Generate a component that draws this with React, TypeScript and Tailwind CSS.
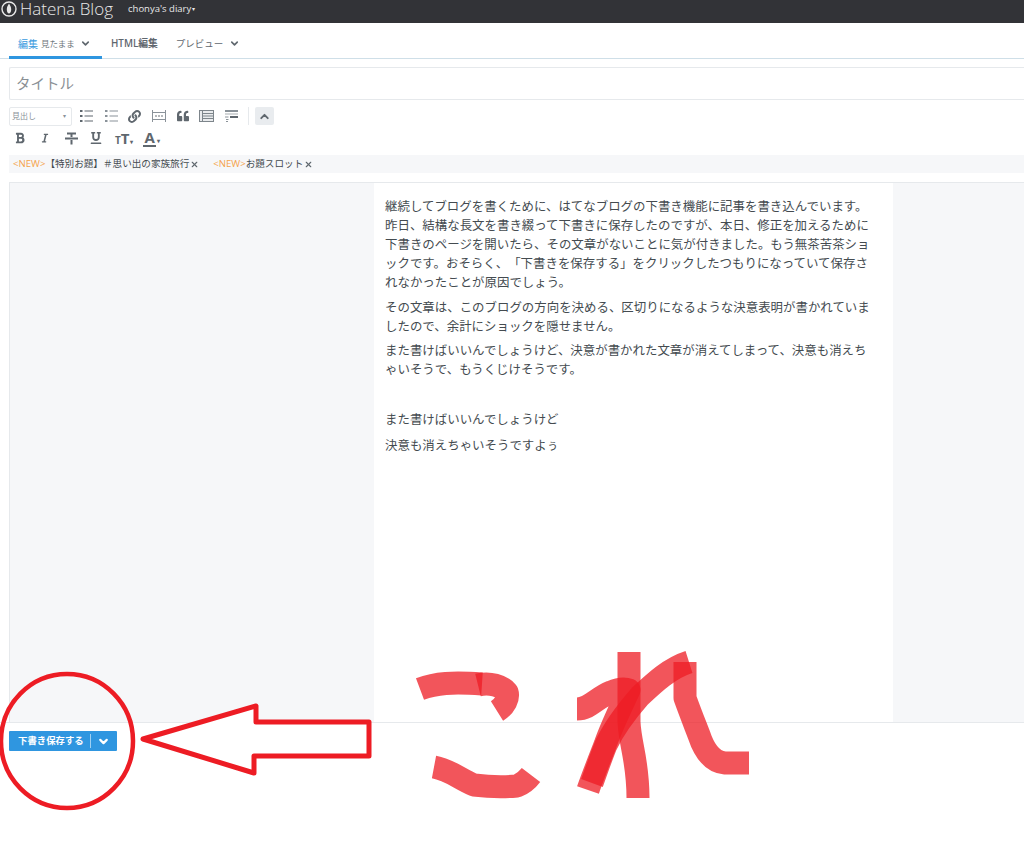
import { ChevronDown, ChevronUp, X } from 'lucide-react';
import { FaBold, FaItalic, FaLink, FaQuoteLeft, FaUnderline } from 'react-icons/fa';

const font = 'font-["Open_Sans","Noto_Sans_CJK_JP",sans-serif]';

const paragraphs = [
  {
    lines: [
      '継続してブログを書くために、はてなブログの下書き機能に記事を書き込んでいます。',
      '昨日、結構な長文を書き綴って下書きに保存したのですが、本日、修正を加えるために',
      '下書きのページを開いたら、その文章がないことに気が付きました。もう無茶苦茶ショ',
      'ックです。おそらく、「下書きを保存する」をクリックしたつもりになっていて保存さ',
      'れなかったことが原因でしょう。',
    ],
    className: 'mb-[6px]',
  },
  {
    lines: [
      'その文章は、このブログの方向を決める、区切りになるような決意表明が書かれていま',
      'したので、余計にショックを隠せません。',
    ],
    className: 'mb-[5px]',
  },
  {
    lines: [
      'また書けばいいんでしょうけど、決意が書かれた文章が消えてしまって、決意も消えち',
      'ゃいそうで、もうくじけそうです。',
    ],
    className: 'mb-[31px]',
  },
  { lines: ['また書けばいいんでしょうけど'], className: 'mb-[7px]' },
  { lines: ['決意も消えちゃいそうですよぅ'], className: '' },
];

function HatenaLogo() {
  return (
    <svg width="16" height="16" viewBox="0 0 16 16" className="shrink-0">
      <circle cx="8" cy="8" r="7" fill="none" stroke="#e8e8e8" strokeWidth="1.4" />
      <path d="M8 2.500c1.200 2 2.200 3.400 2.200 6S9 12.500 8 12.500 5.800 11 5.800 8.500 6.800 4.500 8 2.500z" fill="#e8e8e8" />
    </svg>
  );
}

function ListIcon({ ordered }: { ordered?: boolean }) {
  const c = ordered ? '#8a9299' : '#5f676e';
  return (
    <svg width="13" height="12" viewBox="0 0 13 12">
      {[1, 6, 11].map((y) => (
        <g key={y}>
          <rect x="0" y={y - 1} width="2.500" height="2" fill={c} />
          <rect x="4.500" y={y - 0.5} width="8.500" height="1" fill={c} />
        </g>
      ))}
    </svg>
  );
}

function MoreIcon() {
  return (
    <svg width="14" height="12" viewBox="0 0 14 12" className="ml-[11px]">
      <path d="M.5 0v12M13.500 0v12" stroke="#8a9299" strokeWidth="1" />
      <path d="M1 2.500h12M1 9.500h12" stroke="#8a9299" strokeWidth="1" />
      <path d="M3 6h2M6 6h2M9 6h2" stroke="#6b7379" strokeWidth="1.200" />
    </svg>
  );
}

function TableIcon() {
  return (
    <svg width="15" height="12" viewBox="0 0 15 12" className="ml-[10px]">
      <rect x="0.500" y="0.500" width="14" height="11" fill="#e9ebed" stroke="#7d858b" />
      <path d="M3.500 1v10M4 3.500h10M4 6h10M4 8.500h10" stroke="#7d858b" strokeWidth="1" />
    </svg>
  );
}

function SnippetIcon() {
  return (
    <svg width="13" height="12" viewBox="0 0 13 12" className="ml-[11px]">
      <rect x="0" y="0" width="13" height="2" fill="#8a9299" />
      <rect x="0" y="3.500" width="13" height="1" fill="#a7adb2" />
      <rect x="5" y="6" width="8" height="2" fill="#5f676e" />
      <path d="M0 7h3.500M1 9.500h2.500M1 11.500h2" stroke="#8a9299" strokeWidth="1" />
    </svg>
  );
}

function StrikeIcon() {
  return (
    <svg width="13" height="13" viewBox="0 0 13 13" className="ml-[15px]">
      <path d="M2 1.500h9M6.500 1.500v3.500M0 6.500h13M6.500 8v4.500" stroke="#5f676e" strokeWidth="2" />
    </svg>
  );
}

function Toolbar() {
  return (
    <div className="ml-[9px] h-[55px] text-[#5f676e]">
      <div className="mt-[6px] flex h-[20px] items-center">
        <div className="flex h-[19px] w-[63px] items-center justify-between rounded-[2px] border border-[#e6e9ec] pl-[2px] pr-[5px] text-[8px] text-[#8a9299]">
          <span>見出し</span>
          <span className="text-[6px]">▾</span>
        </div>
        <div className="ml-[8px] flex items-center">
          <ListIcon />
          <span className="ml-[12px] flex">
            <ListIcon ordered />
          </span>
          <FaLink size={13} className="ml-[10px] text-[#5f676e]" />
          <MoreIcon />
          <FaQuoteLeft size={12} className="ml-[11px] text-[#5f676e]" />
          <TableIcon />
          <SnippetIcon />
        </div>
        <div className="ml-[10px] h-[18px] w-px bg-[#e6e9ec]" />
        <div className="ml-[6px] flex h-[18px] w-[19px] items-center justify-center rounded-[2px] bg-[#e9ecef]">
          <ChevronUp size={13} strokeWidth={3.500} className="text-[#5f676e]" />
        </div>
      </div>
      <div className="mt-[3px] flex h-[18px] items-center pl-[5px] text-[#5f676e]">
        <FaBold size={12} />
        <FaItalic size={10} className="ml-[14px]" />
        <StrikeIcon />
        <FaUnderline size={12} className="ml-[12px]" />
        <span className="ml-[13px] flex items-baseline font-bold leading-none">
          <span className="text-[10px]">T</span>
          <span className="text-[15px]">T</span>
          <span className="ml-[1px] text-[6px]">▾</span>
        </span>
        <span className="ml-[10px] flex items-baseline font-bold leading-none">
          <span className="border-b-2 border-[#5f676e] px-[1px] text-[15px]">A</span>
          <span className="ml-[1px] text-[6px]">▾</span>
        </span>
      </div>
    </div>
  );
}

export default function App() {
  return (
    <div className={`relative flex h-[843px] w-[1024px] flex-col overflow-hidden bg-white ${font}`}>
      <header className="flex h-[23px] shrink-0 items-center bg-[#323337] pb-[6px] pl-[1px] text-[#e8e8e8]">
        <HatenaLogo />
        <span className="ml-[3px] text-[17px] font-light leading-[17px]">Hatena Blog</span>
        <span className="ml-[15px] text-[9.500px] leading-none">chonya's diary</span>
        <span className="ml-[1px] text-[6px] leading-none">▾</span>
      </header>

      <nav className="mt-[10px] flex h-[26px] shrink-0 items-start border-b border-[#cfdfe8] pl-[9px] text-[10px] leading-[22px]">
        <div className="flex h-[26px] w-[93px] items-start border-b-[3px] border-[#2f96e0] pl-[9px]">
          <span className="text-[#3a9be0]">編集</span>
          <span className="ml-[3px] text-[8.500px] text-[#6f777d]">見たまま</span>
          <ChevronDown size={11} strokeWidth={3.500} className="ml-[5px] mt-[5px] text-[#5f676e]" />
        </div>
        <span className="ml-[9px] text-[9.800px] font-semibold text-[#5f676e]">HTML編集</span>
        <span className="ml-[18px] text-[9.500px] text-[#5f676e]">プレビュー</span>
        <ChevronDown size={11} strokeWidth={3.500} className="ml-[6px] mt-[5px] text-[#5f676e]" />
      </nav>

      <div className="ml-[9px] mt-[8px] flex h-[33px] shrink-0 items-center rounded-l-[2px] border border-r-0 border-[#e6e9ec] pl-[6px] pt-[1px] text-[14.500px] text-[#8a9095]">
        タイトル
      </div>

      <Toolbar />

      <div className="ml-[9px] flex h-[18px] shrink-0 items-center bg-[#f6f7f9] pl-[4px] text-[9.600px] text-[#444b50] [text-spacing-trim:space-all]">
        <span className="text-[#f5a24a]">&lt;NEW&gt;</span>
        <span>【特別お題】＃思い出の家族旅行</span>
        <X size={9} strokeWidth={3} className="ml-[1px] text-[#5f676e]" />
        <span className="ml-[14px] text-[#f5a24a]">&lt;NEW&gt;</span>
        <span>お題スロット</span>
        <X size={9} strokeWidth={3} className="ml-[1px] text-[#5f676e]" />
      </div>

      <main className="ml-[9px] mt-[9px] flex h-[540px] shrink-0 border-l border-t border-[#e6e9ec] bg-[#f6f7f9]">
        <div className="ml-[364px] w-[519px] bg-white pl-[11px] pt-[14px] text-[12.450px] leading-[19px] text-[#444b50] [text-spacing-trim:space-all]">
          {paragraphs.map((p) => (
            <p key={p.lines[0]} className={p.className}>
              {p.lines.map((line) => (
                <span key={line} className="block whitespace-nowrap">
                  {line}
                </span>
              ))}
            </p>
          ))}
        </div>
      </main>

      <div className="h-px shrink-0 bg-[#e6e9ec]" />

      <div className="ml-[9px] mt-[8px] flex h-[20px] w-[108px] items-center rounded-[1px] bg-[#2f96e0] pl-[9px] text-[9.400px] font-semibold text-white">
        <span>下書き保存する</span>
        <span className="ml-[6px] h-[14px] w-px bg-[#9fd0f2]" />
        <ChevronDown size={13} strokeWidth={4} className="ml-[6px]" />
      </div>

      {/* annotations drawn on top of the screenshot */}
      <svg className="absolute left-0 top-0" width="1024" height="843" viewBox="0 0 1024 843" fill="none">
        <ellipse cx="67" cy="741" rx="66" ry="67" stroke="#ed1c24" strokeWidth="4.500" />
        <path d="M143 739L256 706V722H369V756H254V773Z" fill="white" stroke="#ed1c24" strokeWidth="5" strokeLinejoin="round" />
        <g stroke="#ed1c24" strokeOpacity="0.75" strokeWidth="23" strokeLinejoin="round">
          <path d="M420 689C436 683 452 682 482 684" />
          <path d="M478 685C490 682 502 686 507 692C509 698 505 706 497 711" />
          <path d="M434 767C450 770 458 778 474 785C490 787 506 787 517 786C524 783 528 779 531 775" />
          <path d="M629 652V722C630 745 638 760 638 798" />
          <path d="M577 709C590 709 596 698 611 692C618 689 624 688 629 690C622 705 612 725 605 745C598 763 592 778 588 790" />
          <path d="M689 662C670 668 655 682 640 696C626 712 614 728 606 745C600 760 596 772 592 783" />
          <path d="M685 662V698C690 712 694 722 699 735C704 750 712 762 725 763H749" />
        </g>
      </svg>
    </div>
  );
}
